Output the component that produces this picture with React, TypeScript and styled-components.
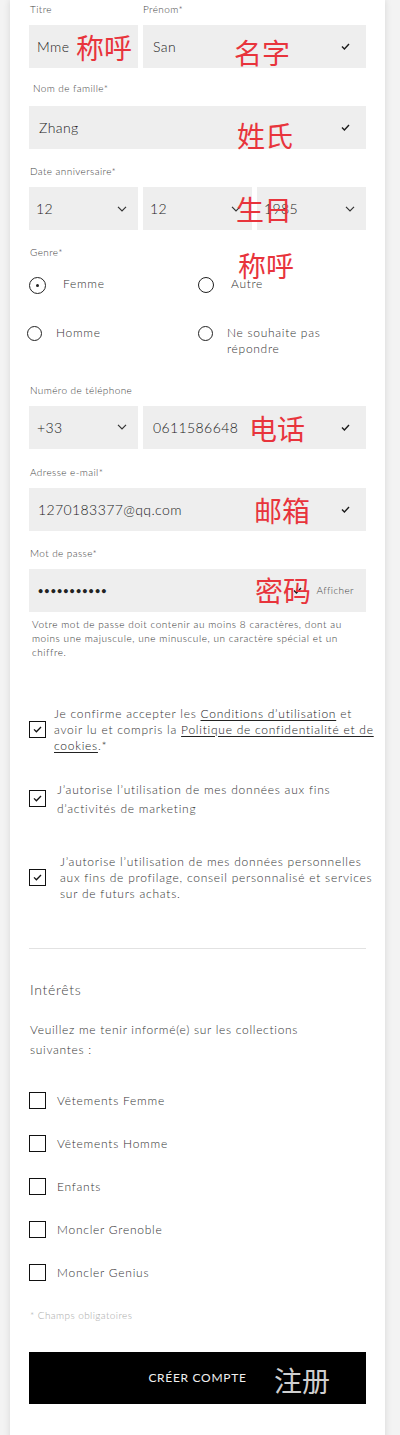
import React from "react";
import styled, { createGlobalStyle } from "styled-components";

const Global = createGlobalStyle`
  html, body { margin: 0; padding: 0; }
  body {
    background: #f3f3f3;
    font-family: "Lato", "Liberation Sans", sans-serif;
    font-weight: 300;
    -webkit-font-smoothing: antialiased;
  }
  * { box-sizing: border-box; }
`;

const Card = styled.div`
  margin-left: 10px;
  width: 375px;
  min-height: 1460px;
  background: #fff;
  box-shadow: 0 0 7px rgba(0, 0, 0, 0.12);
  padding: 2px 19px 40px 19px;
  letter-spacing: 0.4px;
`;

const Group = styled.div<{ $top?: number }>`
  position: relative;
  margin-top: ${(p) => p.$top ?? 0}px;
`;

const Label = styled.div<{ $indent?: number; $gap?: number }>`
  font-size: 10px;
  line-height: 14px;
  color: #444;
  padding-left: ${(p) => p.$indent ?? 1}px;
  margin-bottom: ${(p) => p.$gap ?? 9}px;
`;

const Row = styled.div<{ $cols: string }>`
  position: relative;
  display: grid;
  grid-template-columns: ${(p) => p.$cols};
  column-gap: 5px;
`;

const Field = styled.div<{ $pad?: number; $right?: number }>`
  position: relative;
  height: 43px;
  background: #eeeeee;
  display: flex;
  align-items: center;
  padding: 0 ${(p) => p.$right ?? 16}px 0 ${(p) => p.$pad ?? 8}px;
  font-size: 14px;
  color: #222;
  letter-spacing: 0.4px;
`;

const Value = styled.span`
  flex: 1;
  white-space: nowrap;
`;

const Dots = styled.span`
  flex: 1;
  font-size: 9px;
  letter-spacing: 1.1px;
  color: #222;
  font-weight: 700;
`;

const Show = styled.span`
  font-size: 10px;
  color: #444;
  margin-left: 14px;
  margin-right: -2px;
`;

const Note = styled.p`
  margin: 5px 0 0 0;
  padding-left: 3px;
  font-size: 10px;
  line-height: 14px;
  color: #333;
  letter-spacing: 0.55px;
  white-space: nowrap;
`;

const Annotation = styled.span<{ $left: number; $dy: number; $muted?: boolean }>`
  position: absolute;
  left: ${(p) => p.$left}px;
  top: 50%;
  transform: translateY(calc(-50% + ${(p) => p.$dy}px));
  font-family: "Noto Sans CJK SC", sans-serif;
  font-weight: 400;
  font-size: 28px;
  line-height: 1;
  letter-spacing: 0;
  color: ${(p) => (p.$muted ? "#cfcfcf" : "#e8343c")};
  pointer-events: none;
  white-space: nowrap;
`;

const RadioGrid = styled.div`
  position: relative;
  display: grid;
  grid-template-columns: 169px 1fr;
  row-gap: 31px;
  margin-top: 17px;
`;

const RadioItem = styled.label<{ $gap: number; $shift?: number }>`
  display: flex;
  align-items: flex-start;
  gap: ${(p) => p.$gap}px;
  margin-left: ${(p) => p.$shift ?? 0}px;
  font-size: 12px;
  line-height: 16px;
  color: #333;
  letter-spacing: 0.7px;
`;

const RadioCircle = styled.span<{ $on?: boolean; $size: number }>`
  flex: none;
  width: ${(p) => p.$size}px;
  height: ${(p) => p.$size}px;
  margin-top: ${(p) => (16 - p.$size) / 2 + 1}px;
  border: 1.5px solid #222;
  border-radius: 50%;
  display: flex;
  align-items: center;
  justify-content: center;
  &::after {
    content: "";
    width: 3px;
    height: 3px;
    border-radius: 50%;
    background: #222;
    display: ${(p) => (p.$on ? "block" : "none")};
  }
`;

const RadioText = styled.span`
  width: 140px;
`;

const Consent = styled.div<{ $top: number; $gap: number }>`
  display: flex;
  align-items: center;
  gap: ${(p) => p.$gap}px;
  margin-top: ${(p) => p.$top}px;
`;

const ConsentText = styled.div<{ $lh: number }>`
  font-size: 12px;
  line-height: ${(p) => p.$lh}px;
  color: #333;
  letter-spacing: 0.75px;
  white-space: nowrap;
  a {
    color: #222;
    text-decoration: underline;
    text-underline-offset: 2px;
  }
`;

const Box = styled.span<{ $size?: number }>`
  flex: none;
  width: ${(p) => p.$size ?? 17}px;
  height: ${(p) => p.$size ?? 17}px;
  border: 1.5px solid #111;
  display: flex;
  align-items: center;
  justify-content: center;
`;

const Divider = styled.hr`
  margin: 46px 0 0 0;
  border: none;
  border-top: 1px solid #e2e2e2;
`;

const Heading = styled.div`
  margin-top: 31px;
  padding-left: 1px;
  font-size: 14px;
  line-height: 20px;
  color: #444;
  letter-spacing: 0.7px;
`;

const Intro = styled.p`
  margin: 20px 0 0 0;
  padding-left: 1px;
  font-size: 12px;
  line-height: 20px;
  color: #333;
  letter-spacing: 0.7px;
`;

const InterestList = styled.div`
  display: flex;
  flex-direction: column;
  gap: 23px;
  margin-top: 31px;
`;

const Interest = styled.label`
  display: flex;
  align-items: center;
  gap: 11px;
  height: 20px;
  font-size: 12px;
  color: #333;
  letter-spacing: 0.75px;
`;

const Required = styled.div`
  margin-top: 25px;
  padding-left: 1px;
  font-size: 10px;
  line-height: 14px;
  color: #a8a8a8;
  letter-spacing: 0.4px;
`;

const Submit = styled.button`
  position: relative;
  margin-top: 30px;
  width: 100%;
  height: 52px;
  border: none;
  background: #000;
  color: #f0f0f0;
  font-family: "Lato", "Liberation Sans", sans-serif;
  font-weight: 400;
  font-size: 12px;
  letter-spacing: 0.7px;
  padding: 0;
  display: flex;
  align-items: center;
  justify-content: center;
`;

const Check = () => (
  <svg width="9" height="7" viewBox="0 0 9 7" fill="none">
    <polyline points="1,3.6 3.4,6 8,1" stroke="#1a1a1a" strokeWidth="1.4" />
  </svg>
);

const Chevron = () => (
  <svg width="10" height="6" viewBox="0 0 10 6" fill="none">
    <polyline points="1,0.8 5,4.8 9,0.8" stroke="#333" strokeWidth="1.2" />
  </svg>
);

const BoxCheck = () => (
  <svg width="9" height="7" viewBox="0 0 9 7" fill="none">
    <polyline points="1,3.4 3.4,5.8 8,1" stroke="#111" strokeWidth="1.3" />
  </svg>
);

const interests = [
  "Vêtements Femme",
  "Vêtements Homme",
  "Enfants",
  "Moncler Grenoble",
  "Moncler Genius",
];

export default function App() {
  return (
    <>
      <Global />
      <Card>
        <Row $cols="109px 1fr">
          <Group>
            <Label>Titre</Label>
            <Field>
              <Value>Mme</Value>
              <Annotation $left={47} $dy={0}>称呼</Annotation>
            </Field>
          </Group>
          <Group>
            <Label $indent={0}>Prénom*</Label>
            <Field $pad={10}>
              <Value>San</Value>
              <Check />
              <Annotation $left={91} $dy={5}>名字</Annotation>
            </Field>
          </Group>
        </Row>

        <Group $top={13}>
          <Label $indent={4} $gap={11}>Nom de famille*</Label>
          <Field $pad={10}>
            <Value>Zhang</Value>
            <Check />
            <Annotation $left={208} $dy={7}>姓氏</Annotation>
          </Field>
        </Group>

        <Group $top={15}>
          <Label>Date anniversaire*</Label>
          <Row $cols="repeat(3, 1fr)">
            <Field $pad={7} $right={11}>
              <Value>12</Value>
              <Chevron />
            </Field>
            <Field $pad={7} $right={11}>
              <Value>12</Value>
              <Chevron />
            </Field>
            <Field $pad={7} $right={11}>
              <Value>1985</Value>
              <Chevron />
            </Field>
            <Annotation $left={207} $dy={0}>生日</Annotation>
          </Row>
        </Group>

        <Group $top={15}>
          <Label>Genre*</Label>
          <Annotation $left={209} $dy={-36}>称呼</Annotation>
          <RadioGrid>
            <RadioItem $gap={17}>
              <RadioCircle $on $size={17} />
              <RadioText>Femme</RadioText>
            </RadioItem>
            <RadioItem $gap={17}>
              <RadioCircle $size={16} />
              <RadioText>Autre</RadioText>
            </RadioItem>
            <RadioItem $gap={14} $shift={-2}>
              <RadioCircle $size={15} />
              <RadioText>Homme</RadioText>
            </RadioItem>
            <RadioItem $gap={14}>
              <RadioCircle $size={15} />
              <RadioText>Ne souhaite pas répondre</RadioText>
            </RadioItem>
          </RadioGrid>
        </Group>

        <Group $top={26}>
          <Label>Numéro de téléphone</Label>
          <Row $cols="109px 1fr">
            <Field $pad={8} $right={11}>
              <Value>+33</Value>
              <Chevron />
            </Field>
            <Field $pad={10}>
              <Value>0611586648</Value>
              <Check />
              <Annotation $left={106} $dy={1}>电话</Annotation>
            </Field>
          </Row>
        </Group>

        <Group $top={16}>
          <Label>Adresse e-mail*</Label>
          <Field $pad={9}>
            <Value>1270183377@qq.com</Value>
            <Check />
            <Annotation $left={225} $dy={1}>邮箱</Annotation>
          </Field>
        </Group>

        <Group $top={15}>
          <Label>Mot de passe*</Label>
          <Field $pad={9} $right={14}>
            <Dots>•••••••••••</Dots>
            <Check />
            <Show>Afficher</Show>
            <Annotation $left={226} $dy={0}>密码</Annotation>
          </Field>
          <Note>
            Votre mot de passe doit contenir au moins 8 caractères, dont au
            <br />
            moins une majuscule, une minuscule, un caractère spécial et un
            <br />
            chiffre.
          </Note>
        </Group>

        <Consent $top={47} $gap={8}>
          <Box $size={17}>
            <BoxCheck />
          </Box>
          <ConsentText $lh={16}>
            Je confirme accepter les <a>Conditions d’utilisation</a> et
            <br />
            avoir lu et compris la <a>Politique de confidentialité et de</a>
            <br />
            <a>cookies</a>.*
          </ConsentText>
        </Consent>

        <Consent $top={26} $gap={11}>
          <Box $size={17}>
            <BoxCheck />
          </Box>
          <ConsentText $lh={19}>
            J’autorise l’utilisation de mes données aux fins
            <br />
            d’activités de marketing
          </ConsentText>
        </Consent>

        <Consent $top={36} $gap={14}>
          <Box $size={17}>
            <BoxCheck />
          </Box>
          <ConsentText $lh={16}>
            J’autorise l’utilisation de mes données personnelles
            <br />
            aux fins de profilage, conseil personnalisé et services
            <br />
            sur de futurs achats.
          </ConsentText>
        </Consent>

        <Divider />

        <Heading>Intérêts</Heading>
        <Intro>
          Veuillez me tenir informé(e) sur les collections
          <br />
          suivantes :
        </Intro>

        <InterestList>
          {interests.map((name) => (
            <Interest key={name}>
              <Box $size={17} />
              {name}
            </Interest>
          ))}
        </InterestList>

        <Required>* Champs obligatoires</Required>

        <Submit type="button">
          CRÉER COMPTE
          <Annotation $left={245} $dy={2} $muted>
            注册
          </Annotation>
        </Submit>
      </Card>
    </>
  );
}
